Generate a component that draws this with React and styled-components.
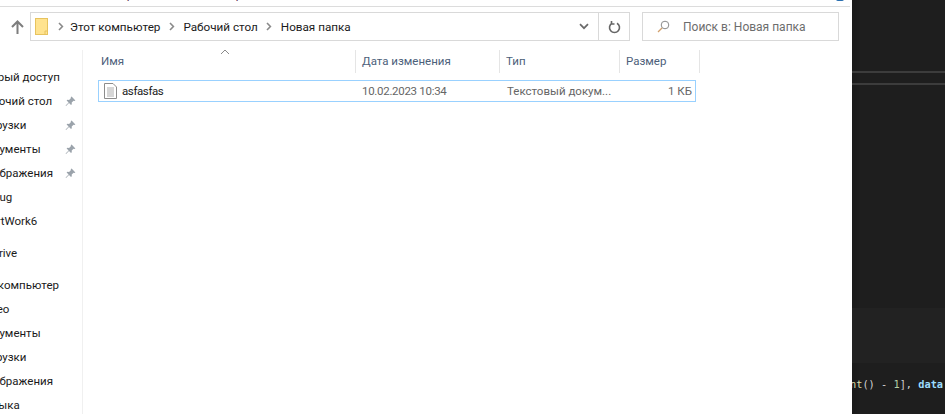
import React from "react";
import styled, { createGlobalStyle } from "styled-components";

const Global = createGlobalStyle`
  html, body { margin: 0; padding: 0; background: #fff; overflow: hidden; }
  * { box-sizing: border-box; }
`;
const Page = styled.div`
  display: flex; width: 945px; height: 414px; overflow: hidden;
  font-family: Roboto, "Open Sans", sans-serif; font-size: 11.5px; color: #1a1a1a;
`;
const Explorer = styled.div`
  width: 852px; flex: none; display: flex; flex-direction: column; background: #fff;
`;
const TopStrip = styled.div`
  height: 7px; flex: none; margin-right: 2px; border-bottom: 1px solid #dcdcdc; position: relative; overflow: hidden;
`;
const Clipped = styled.span`
  position: absolute; left: 80px; top: -13px; font-size: 12px; color: #5a2a50;
`;
const CloseHint = styled.span`
  position: absolute; right: 6px; top: -3px; width: 8px; height: 4px; border-radius: 4px; background: #2a6fb0;
`;
const Toolbar = styled.div`
  height: 43px; flex: none; display: flex; align-items: flex-start; padding: 5px 13px 0 7px;
`;
const UpButton = styled.div`
  width: 23px; height: 29px; flex: none; display: flex; align-items: center; justify-content: flex-start; padding-left: 4px;
`;
const AddressBar = styled.div`
  width: 600px; height: 29px; flex: none; border: 1px solid #d9d9d9; display: flex; align-items: center; padding-left: 4px;
`;
const FolderBox = styled.div`
  width: 17px; height: 18px; flex: none; display: flex;
`;
const Crumb = styled.span`
  color: #1a1a1a; white-space: nowrap; font-size: 11.7px;
`;
const Sep = styled.span`
  width: 23px; flex: none; display: flex; align-items: center; justify-content: center;
`;
const FirstSep = styled(Sep)`width: 18px;`;
const DropArea = styled.div`
  margin-left: auto; width: 30px; height: 100%; flex: none; display: flex; align-items: center; justify-content: center; border-right: 1px solid #d9d9d9;
`;
const Refresh = styled.div`
  width: 30px; height: 100%; flex: none; display: flex; align-items: center; justify-content: center;
`;
const SearchBox = styled.div`
  width: 197px; height: 29px; margin-left: 12px; flex: none; border: 1px solid #d9d9d9; display: flex; align-items: center; padding-left: 14px; color: #6d6d6d; font-size: 12px;
`;
const SearchText = styled.span`margin-left: 13px; white-space: nowrap;`;
const Body = styled.div`flex: 1; display: flex; min-height: 0;`;
const Sidebar = styled.div`
  width: 83px; flex: none; border-right: 1px solid #f0f0f0; overflow: hidden; padding-top: 15px;
`;
const NavRow = styled.div`
  height: 24px; display: flex; align-items: center; margin-left: ${p => p.$offset}px; margin-top: ${p => p.$gap || 0}px; white-space: nowrap;
`;
const NavLabel = styled.span`
  width: ${p => 65 - p.$offset}px; flex: none; color: #1a1a1a;
`;
const Content = styled.div`flex: 1; padding: 0 0 0 15px; min-width: 0;`;
const Header = styled.div`
  height: 23px; display: flex; position: relative; color: #4c607a;
`;
const SortMark = styled.svg`
  position: absolute; left: 122px; top: -1px;
`;
const Column = styled.div`
  width: ${p => p.$w}px; flex: none; border-right: 1px solid #e5e5e5; padding: 4px 0 0 ${p => p.$pad}px; white-space: nowrap;
`;
const Row = styled.div`
  margin-top: 7px; width: 598px; height: 22px; border: 1px solid #99d1ff; display: flex; align-items: center; color: #666;
`;
const Cell = styled.div`
  width: ${p => p.$w}px; flex: none; white-space: nowrap; overflow: hidden; text-align: ${p => p.$align || "left"}; padding-left: ${p => p.$pad || 0}px; padding-right: ${p => p.$padR || 0}px; color: #666; letter-spacing: ${p => p.$track || 0}px;
`;
const NameCell = styled.div`
  width: 258px; flex: none; display: flex; align-items: center; gap: 5px; padding-left: 5px; color: #1a1a1a; letter-spacing: -0.4px;
`;
const Editor = styled.div`
  flex: 1; min-width: 0; background: linear-gradient(90deg, #1a1a1a 0, #1e1e1e 8px); display: flex; flex-direction: column; overflow: hidden;
`;
const EditorLine = styled.div`
  height: 2px; flex: none; background: #3c3c3c; margin-top: ${p => p.$top}px;
`;
const Band = styled.div`
  height: 55px; flex: none; margin-top: 223px; background: #222;
`;
const CodeLine = styled.div`
  margin-top: 12px; margin-left: -2px; white-space: nowrap; font-family: "DejaVu Sans Mono", "Liberation Mono", monospace; font-size: 10.3px; line-height: 18px; color: #d4d4d4;
`;
const Tok = styled.span`color: ${p => p.$c}; font-weight: ${p => p.$b ? 600 : 400};`;

const Chevron = () => (
  <svg width="6" height="9" viewBox="0 0 6 9"><path d="M1 1l3.400 3.500L1 8" fill="none" stroke="#8a8a8a" strokeWidth="1.6" /></svg>
);
const Pin = () => (
  <svg width="11" height="11" viewBox="0 0 11 11"><path d="M6.600.6l3.800 3.800-1 .6-.8-.3-1.900 1.900.1 1.700-.8.8-2-2L1 10l-.4-.4 3-3-2-2 .8-.8 1.700.1 1.900-1.900-.3-.8z" fill="#9ba3ab" /></svg>
);

const quick = [
  ["Быстрый доступ", -30], ["Рабочий стол", -21, 1], ["Загрузки", -22, 1], ["Документы", -22, 1], ["Изображения", -21, 1],
  ["bug", -7], ["ArtWork6", -11],
];
const pc = [["Видео", -24], ["Документы", -22], ["Загрузки", -22], ["Изображения", -21], ["Музыка", -23]];

export default function App() {
  return (
    <Page>
      <Global />
      <Explorer>
        <TopStrip><Clipped>Редактирование данных в файле</Clipped><CloseHint /></TopStrip>
        <Toolbar>
          <UpButton>
            <svg width="13" height="14" viewBox="0 0 13 14"><path d="M6.500 14V2M1 7l5.500-5.500L12 7" fill="none" stroke="#7d7d7d" strokeWidth="2" /></svg>
          </UpButton>
          <AddressBar>
            <FolderBox>
              <svg width="13" height="17" viewBox="0 0 13 17"><rect x=".5" y=".5" width="12" height="16" fill="#ffe38f" stroke="#e7c35e" /><path d="M10 17v-4h3" fill="none" stroke="#e7c35e" /></svg>
            </FolderBox>
            <FirstSep><Chevron /></FirstSep>
            <Crumb>Этот компьютер</Crumb>
            <Sep><Chevron /></Sep>
            <Crumb>Рабочий стол</Crumb>
            <Sep><Chevron /></Sep>
            <Crumb>Новая папка</Crumb>
            <DropArea>
              <svg width="10" height="7" viewBox="0 0 10 7"><path d="M1 1.200l4 4 4-4" fill="none" stroke="#6a6a6a" strokeWidth="1.7" /></svg>
            </DropArea>
            <Refresh>
              <svg width="13" height="14" viewBox="0 0 13 14"><path d="M4 3.200a5 5 0 1 0 5 0M3.500 1v3h3" fill="none" stroke="#666" strokeWidth="1.6" /></svg>
            </Refresh>
          </AddressBar>
          <SearchBox>
            <svg width="13" height="13" viewBox="0 0 13 13"><circle cx="8" cy="5" r="3.800" fill="none" stroke="#8a8a8a" /><path d="M5 8l-4 4" stroke="#d2a06c" strokeWidth="1.3" /></svg>
            <SearchText>Поиск в: Новая папка</SearchText>
          </SearchBox>
        </Toolbar>
        <Body>
          <Sidebar>
            {quick.map(([t, o, pin]) => (
              <NavRow key={t} $offset={o}>
                <NavLabel $offset={o}>{t}</NavLabel>
                {pin ? <Pin /> : null}
              </NavRow>
            ))}
            <NavRow $offset={-29} $gap={8}><NavLabel $offset={-29}>OneDrive</NavLabel></NavRow>
            <NavRow $offset={-30} $gap={8}><NavLabel $offset={-30}>Этот компьютер</NavLabel></NavRow>
            {pc.map(([t, o]) => (
              <NavRow key={t} $offset={o}><NavLabel $offset={o}>{t}</NavLabel></NavRow>
            ))}
          </Sidebar>
          <Content>
            <Header>
              <SortMark width="10" height="6" viewBox="0 0 10 6"><path d="M1 5l4-4 4 4" fill="none" stroke="#8a8a8a" /></SortMark>
              <Column $w={258} $pad={3}>Имя</Column>
              <Column $w={144} $pad={6}>Дата изменения</Column>
              <Column $w={120} $pad={6}>Тип</Column>
              <Column $w={80} $pad={6}>Размер</Column>
            </Header>
            <Row>
              <NameCell>
                <svg width="13" height="16" viewBox="0 0 13 16"><path d="M.5.5h8.500l3.500 3.500v11.500h-12z" fill="#fff" stroke="#8c8c8c" /><path d="M3 5h7M3 7h7M3 9h7M3 11h7M3 13h7" stroke="#adadad" /></svg>
                asfasfas
              </NameCell>
              <Cell $w={144} $pad={5} $track={-0.3}>10.02.2023 10:34</Cell>
              <Cell $w={120} $pad={6}>Текстовый докум...</Cell>
              <Cell $w={74} $align="right" $padR={3}>1 КБ</Cell>
            </Row>
          </Content>
        </Body>
      </Explorer>
      <Editor>
        <EditorLine $top={71} />
        <EditorLine $top={10} />
        <Band />
        <CodeLine>
          <Tok $c="#dcdcaa">nt</Tok><Tok $c="#d4d4d4">()</Tok> - <Tok $c="#b5cea8">1</Tok>], <Tok $c="#9cdcfe" $b>data</Tok>
        </CodeLine>
      </Editor>
    </Page>
  );
}
